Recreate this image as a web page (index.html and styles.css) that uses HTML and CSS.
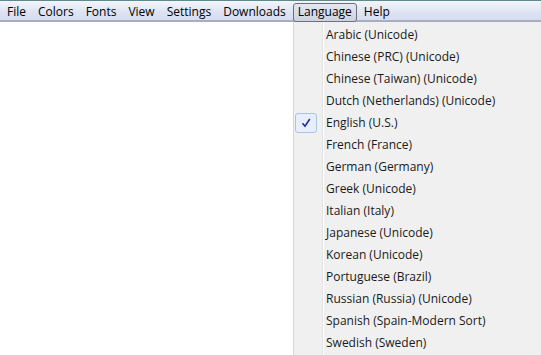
FILE: index.html
```html
<!DOCTYPE html>
<html lang="en">

<head>
  <meta charset="UTF-8">
  <title>Language menu</title>
  <link rel="stylesheet" href="styles.css">
</head>

<body>
  <div class="menubar">
    <div class="item">File</div>
    <div class="item">Colors</div>
    <div class="item">Fonts</div>
    <div class="item">View</div>
    <div class="item">Settings</div>
    <div class="item">Downloads</div>
    <div class="item active">Language</div>
    <div class="item">Help</div>
  </div>

  <div class="dropdown">
    <div class="entry">Arabic (Unicode)</div>
    <div class="entry">Chinese (PRC) (Unicode)</div>
    <div class="entry">Chinese (Taiwan) (Unicode)</div>
    <div class="entry">Dutch (Netherlands) (Unicode)</div>
    <div class="entry checked">
      <span class="check">
        <svg width="12" height="12" viewBox="0 0 12 12"><path d="M2.5 6.2 L5 9.2 L9.8 2" fill="none" stroke="#1c2e9c" stroke-width="1.6"/></svg>
      </span>English (U.S.)
    </div>
    <div class="entry">French (France)</div>
    <div class="entry">German (Germany)</div>
    <div class="entry">Greek (Unicode)</div>
    <div class="entry">Italian (Italy)</div>
    <div class="entry">Japanese (Unicode)</div>
    <div class="entry">Korean (Unicode)</div>
    <div class="entry">Portuguese (Brazil)</div>
    <div class="entry">Russian (Russia) (Unicode)</div>
    <div class="entry">Spanish (Spain-Modern Sort)</div>
    <div class="entry">Swedish (Sweden)</div>
  </div>
</body>

</html>
```

FILE: styles.css
```css
body {
  margin: 0;
  background: #fff;
  font-family: "Open Sans", "DejaVu Sans", sans-serif;
  font-size: 12px;
  color: #000;
  overflow: hidden;
}

.menubar {
  display: flex;
  height: 19px;
  border-top: 1px solid #5e8a8c;
  border-bottom: 2px solid #a9adbd;
  background: linear-gradient(#f3f5fb, #dde3f3 60%, #d6ddf1);
}

.menubar .item {
  padding: 0 6px;
  line-height: 21px;
}

.menubar .item:first-child {
  padding-left: 7px;
}

.menubar .active {
  margin: 2px 1px -2px 1px;
  padding: 0 4px;
  line-height: 16px;
  height: 17px;
  border: 1px solid #6d6f7a;
  border-radius: 3px;
  background: linear-gradient(#e4e7f0, #cdd2e0);
}

.dropdown {
  position: absolute;
  left: 293px;
  top: 22px;
  width: 248px;
  height: 340px;
  padding-top: 2px;
  background: #f0f0f0 linear-gradient(to right, transparent 28px, #e2e3e3 28px, #e2e3e3 29px, #fff 29px, #fff 30px, transparent 30px);
  border-left: 1px solid #d8d8d8;
}

.entry {
  height: 22px;
  line-height: 22px;
  padding-left: 32px;
  position: relative;
  color: #1a1a1a;
}

.check {
  position: absolute;
  left: 1px;
  top: 1px;
  width: 20px;
  height: 18px;
  border: 1px solid #a8c3ea;
  border-radius: 3px;
  background: #e8eefb;
  display: flex;
  align-items: center;
  justify-content: center;
}
```
